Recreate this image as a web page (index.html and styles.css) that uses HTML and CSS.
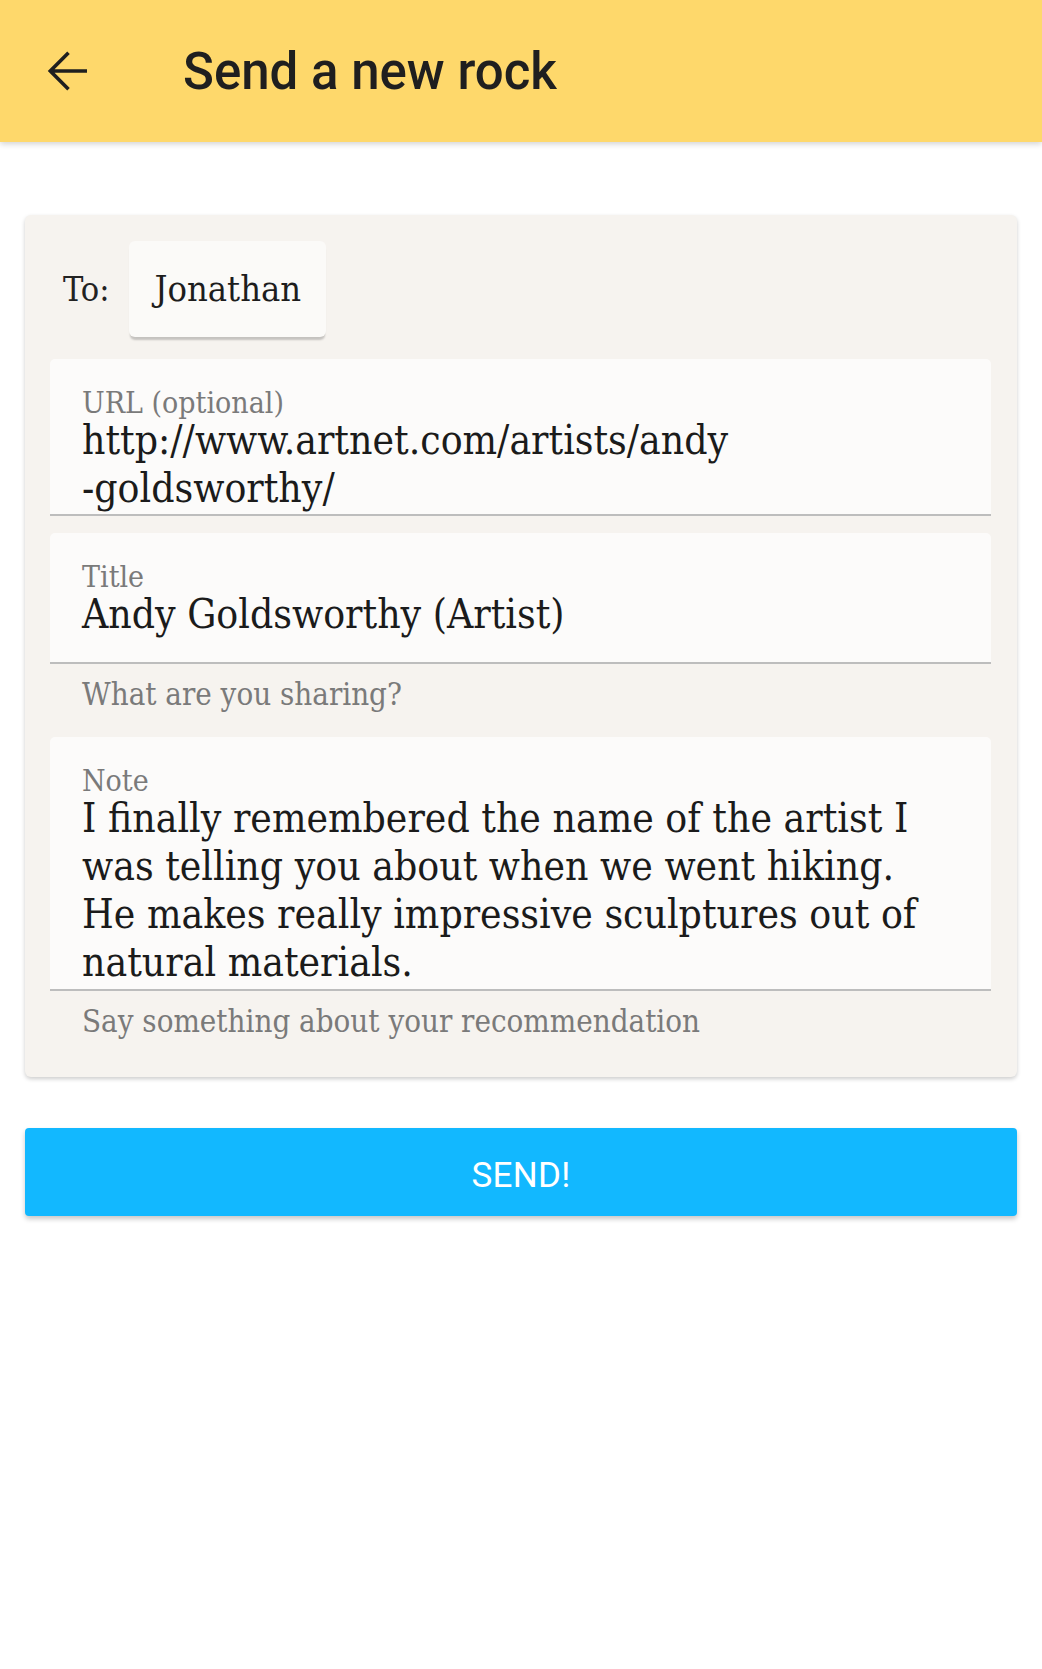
FILE: index.html
```html
<!DOCTYPE html>
<html lang="en">
<head>
<meta charset="utf-8">
<title>Send a new rock</title>
<link rel="stylesheet" href="styles.css">
</head>
<body>
<header class="toolbar">
  <svg class="back" viewBox="0 0 40 40" width="40" height="40" aria-label="Back">
    <path d="M40 20H4 M21.5 1.8L3.3 20l18.2 18.2" fill="none" stroke="#1f1f1f" stroke-width="3.6"/>
  </svg>
  <h1 class="toolbar-title">Send a new rock</h1>
</header>

<main class="content">
  <section class="card">
    <div class="to-row">
      <span class="to-label">To:</span>
      <span class="chip">Jonathan</span>
    </div>

    <div class="field field-url">
      <div class="label">URL (optional)</div>
      <div class="value">http://www.artnet.com/artists/andy<br>-goldsworthy/</div>
    </div>

    <div class="field field-title">
      <div class="label">Title</div>
      <div class="value">Andy Goldsworthy (Artist)</div>
    </div>
    <div class="helper">What are you sharing?</div>

    <div class="field field-note">
      <div class="label">Note</div>
      <div class="value">I finally remembered the name of the artist I<br>was telling you about when we went hiking.<br>He makes really impressive sculptures out of<br>natural materials.</div>
    </div>
    <div class="helper helper-last">Say something about your recommendation</div>
  </section>

  <button class="send" type="button">SEND!</button>
</main>
</body>
</html>
```

FILE: styles.css
```css
html, body {
  margin: 0;
  padding: 0;
  background: #ffffff;
}

body {
  width: 1042px;
  min-height: 1669px;
  font-family: "DejaVu Serif Condensed", "DejaVu Serif", serif;
  font-stretch: condensed;
}

.toolbar {
  height: 142px;
  background: #fed86b;
  display: flex;
  align-items: center;
  padding-left: 47px;
  box-shadow: 0 2px 6px rgba(0, 0, 0, 0.18);
  position: relative;
}

.back {
  display: block;
  flex: none;
}

.toolbar-title {
  margin: 0 0 0 96px;
  font-family: Roboto, "Liberation Sans", sans-serif;
  font-stretch: normal;
  font-weight: 500;
  font-size: 51px;
  color: #1f1f1f;
  letter-spacing: 0;
}

.content {
  padding: 73px 25px 0;
}

.card {
  background: #f6f3ef;
  border-radius: 6px;
  box-shadow: 0 2px 4px rgba(0, 0, 0, 0.2);
  padding: 26px 26px 41px 25px;
}

.to-row {
  display: flex;
  align-items: center;
  gap: 20px;
  padding-left: 13px;
  height: 96px;
  margin-bottom: 21.5px;
}

.to-label {
  font-size: 34px;
  color: #222;
}

.chip {
  height: 96px;
  line-height: 96px;
  padding: 0 25px;
  background: #fbfaf8;
  border-radius: 6px;
  box-shadow: 0 4px 2px -1px rgba(0, 0, 0, 0.2);
  font-size: 36px;
  color: #1d1d1d;
}

.field {
  background: #fcfbfa;
  border-radius: 5px 5px 0 0;
  border-bottom: 2px solid #bdbdbd;
  padding: 31px 32px 24px;
  box-sizing: border-box;
  overflow: hidden;
}

.field-url {
  height: 157px;
  margin-bottom: 17px;
}

.field-note {
  height: 254.5px;
}

.label {
  font-size: 30px;
  line-height: 26px;
  color: #7a7a7a;
}

.value {
  font-size: 40.5px;
  line-height: 48px;
  color: #1b1b1b;
}

.helper {
  font-size: 31px;
  line-height: 30px;
  color: #7a7a7a;
  padding-left: 32px;
  margin: 15px 0 28px;
}

.helper-last {
  margin-bottom: 0;
}

.send {
  display: block;
  width: 100%;
  height: 88.5px;
  margin-top: 50.5px;
  border: 0;
  border-radius: 4px;
  background: #12b8ff;
  color: #ffffff;
  font-family: Roboto, "Liberation Sans", sans-serif;
  font-stretch: normal;
  font-size: 35px;
  font-weight: 400;
  letter-spacing: 0.3px;
  line-height: 88.5px;
  padding: 4px 0 0;
  box-sizing: border-box;
  box-shadow: 0 3px 5px rgba(0, 0, 0, 0.22);
}
```
